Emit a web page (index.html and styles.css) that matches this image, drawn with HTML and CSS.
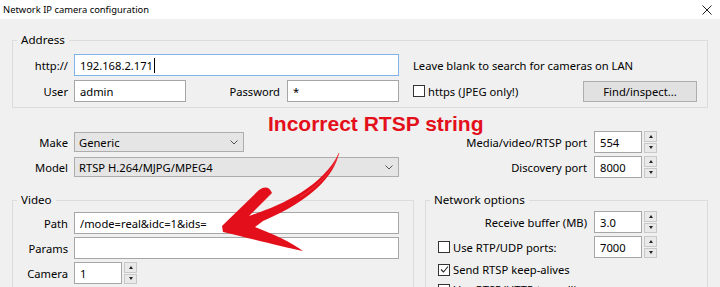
FILE: index.html
```html
<!DOCTYPE html>
<html lang="en">
<head>
    <meta charset="UTF-8">
    <meta name="viewport" content="width=device-width, initial-scale=1.0">
    <title>Network IP camera configuration</title>
    <link rel="stylesheet" href="styles.css">
</head>
<body>
    <div class="window">
        <div class="titlebar">
            <span class="title">Network IP camera configuration</span>
            <svg class="close" width="10" height="10" viewBox="0 0 10 10">
                <path d="M0.5 0.5 L9.5 9.5 M9.5 0.5 L0.5 9.5" stroke="#222" stroke-width="1"/>
            </svg>
        </div>

        <div class="dialog">
            <!-- address -->
            <fieldset class="group address">
                <legend>Address</legend>
                <div class="row">
                    <span class="lbl">http://</span>
                    <div class="field wide focus">192.168.2.171<span class="caret"></span></div>
                    <span class="hint">Leave blank to search for cameras on LAN</span>
                </div>
                <div class="row">
                    <span class="lbl">User</span>
                    <div class="field short">admin</div>
                    <span class="lbl-pass">Password</span>
                    <div class="field short">*</div>
                    <span class="check https"><span class="box"></span>https (JPEG only!)</span>
                    <button class="btn">Find/inspect...</button>
                </div>
            </fieldset>

            <!-- device -->
            <div class="device">
                <div class="row">
                    <span class="lbl">Make</span>
                    <div class="select make">Generic<svg class="chev" width="8" height="5" viewBox="0 0 8 5"><path d="M0.5 0.5 L4 4 L7.5 0.5" fill="none" stroke="#555" stroke-width="1"/></svg></div>
                    <div class="port">
                        <span class="port-lbl">Media/video/RTSP port</span>
                        <div class="spin"><div class="field">554</div><div class="updown"><span class="up"></span><span class="down"></span></div></div>
                    </div>
                </div>
                <div class="row">
                    <span class="lbl">Model</span>
                    <div class="select model">RTSP H.264/MJPG/MPEG4<svg class="chev" width="8" height="5" viewBox="0 0 8 5"><path d="M0.5 0.5 L4 4 L7.5 0.5" fill="none" stroke="#555" stroke-width="1"/></svg></div>
                    <div class="port">
                        <span class="port-lbl">Discovery port</span>
                        <div class="spin"><div class="field">8000</div><div class="updown"><span class="up"></span><span class="down"></span></div></div>
                    </div>
                </div>
            </div>

            <div class="groups">
                <fieldset class="group video">
                    <legend>Video</legend>
                    <div class="row">
                        <span class="lbl">Path</span>
                        <div class="field wide">/mode=real&amp;idc=1&amp;ids=</div>
                    </div>
                    <div class="row">
                        <span class="lbl">Params</span>
                        <div class="field wide"></div>
                    </div>
                    <div class="row">
                        <span class="lbl">Camera</span>
                        <div class="spin"><div class="field">1</div><div class="updown"><span class="up"></span><span class="down"></span></div></div>
                    </div>
                </fieldset>

                <fieldset class="group network">
                    <legend>Network options</legend>
                    <div class="row">
                        <span class="net-lbl">Receive buffer (MB)</span>
                        <div class="spin"><div class="field">3.0</div><div class="updown"><span class="up"></span><span class="down"></span></div></div>
                    </div>
                    <div class="row">
                        <span class="net-check"><span class="box"></span>Use RTP/UDP ports:</span>
                        <div class="spin"><div class="field">7000</div><div class="updown"><span class="up"></span><span class="down"></span></div></div>
                    </div>
                    <div class="row small">
                        <span class="net-check"><span class="box checked"><svg width="9" height="9" viewBox="0 0 9 9"><path d="M1 4.5 L3.5 7 L8 1.5" fill="none" stroke="#222" stroke-width="1.1"/></svg></span>Send RTSP keep-alives</span>
                    </div>
                    <div class="row small">
                        <span class="net-check"><span class="box"></span>Use RTSP/HTTP tunnelling</span>
                    </div>
                </fieldset>
            </div>
        </div>

        <div class="annotation">Incorrect RTSP string</div>
        <svg class="arrow" width="720" height="287" viewBox="0 0 720 287">
            <path d="M222 226 L259 190 Q268 184 272 193 L249 216 C279 206 322 188 339 153 C334 176 312 200 263 221 L255 227 C273 234 291 242 303 251 C283 247 248 238 223 232 Z" fill="#e3101b"/>
            <path d="M339 153 C333 170 320 185 300 197" fill="none" stroke="#f04048" stroke-width="0.8"/>
        </svg>
    </div>
</body>
</html>
```

FILE: styles.css
```css
body {
    margin: 0;
    font-family: "Noto Sans", sans-serif;
    font-size: 11.2px;
    color: #000;
    background-color: #f0f0f0;
    overflow: hidden;
}
.window {
    position: relative;
    width: 720px;
    height: 287px;
    overflow: hidden;
}
.titlebar {
    height: 19px;
    background-color: #fff;
    display: flex;
    align-items: center;
    justify-content: space-between;
    padding: 0 8px 0 3px;
}
.title { font-size: 9.4px; }
.close { margin-top: 1px; }
.dialog {
    padding: 14px 12px 0 12px;
}
.group {
    margin: 0;
    padding: 7px 0 5px 0;
    border: 1px solid #dcdcdc;
    min-width: 0;
}
.group legend {
    margin-left: 4px;
    padding: 0 4px;
    line-height: 14px;
    font-size: 11.6px;
}
.row {
    display: flex;
    align-items: center;
    height: 22px;
}
.row + .row { margin-top: 4px; }
.lbl {
    width: 55px;
    margin-right: 6px;
    text-align: right;
}
.field {
    box-sizing: border-box;
    height: 22px;
    border: 1px solid #a6a6a6;
    background-color: #fff;
    padding: 0 5px;
    display: flex;
    align-items: center;
}
.field.wide { width: 325px; }
.field.short { width: 112px; }
.field.focus { border-color: #7eb4ea; }
.caret {
    width: 1px;
    height: 15px;
    background-color: #000;
    margin-left: 1px;
}
.hint { margin-left: 14px; }
.lbl-pass {
    width: 94px;
    margin-right: 7px;
    text-align: right;
}
.check, .net-check {
    display: flex;
    align-items: center;
    white-space: nowrap;
}
.https { margin-left: 14px; }
.box {
    box-sizing: border-box;
    width: 12px;
    height: 12px;
    border: 1px solid #333;
    background-color: #fff;
    margin-right: 3px;
    display: flex;
    align-items: center;
    justify-content: center;
    flex: none;
}
.btn {
    margin-left: auto;
    margin-right: 10px;
    width: 114px;
    height: 21px;
    border: 1px solid #adadad;
    background-color: #e1e1e1;
    font-family: "Noto Sans", sans-serif;
    font-size: 11.2px;
    padding: 0;
}

.device {
    margin-top: 23px;
}
.device .row + .row { margin-top: 3px; }
.device .lbl { width: 56px; }
.select {
    box-sizing: border-box;
    height: 20px;
    border: 1px solid #adadad;
    background-color: #e5e5e5;
    padding: 0 5px 0 4px;
    display: flex;
    align-items: center;
    justify-content: space-between;
}
.select.make { width: 170px; }
.select.model { width: 325px; }
.port {
    margin-left: auto;
    margin-right: 51px;
    display: flex;
    align-items: center;
}
.port-lbl { margin-right: 7px; }

.spin {
    display: flex;
    gap: 2px;
}
.spin .field { width: 48px; }
.updown {
    width: 13px;
    height: 22px;
    display: flex;
    flex-direction: column;
    gap: 1px;
}
.updown span {
    flex: 1;
    box-sizing: border-box;
    border: 1px solid #c8c8c8;
    background-color: #e9e9e9;
    display: flex;
    align-items: center;
    justify-content: center;
}
.updown .up::after {
    content: "";
    border-left: 2.5px solid transparent;
    border-right: 2.5px solid transparent;
    border-bottom: 3px solid #222;
}
.updown .down::after {
    content: "";
    border-left: 2.5px solid transparent;
    border-right: 2.5px solid transparent;
    border-top: 3px solid #222;
}

.groups {
    display: flex;
    gap: 11px;
    margin-top: 15px;
}
.group.video { width: 402px; box-sizing: border-box; padding-top: 5px; }
.group.video .row + .row { margin-top: 3px; }
.group.network { flex: 1; padding-top: 4px; }
.group.network .row + .row { margin-top: 3px; }
.net-lbl {
    width: 161px;
    margin-right: 7px;
    text-align: right;
}
.net-check {
    min-width: 156px;
    margin-left: 12px;
}
.row.small { height: 17px; }

.annotation {
    position: absolute;
    left: 268px;
    top: 112px;
    font-family: "Liberation Sans", Arial, sans-serif;
    font-weight: bold;
    font-size: 21px;
    color: #e3101b;
}
.arrow {
    position: absolute;
    left: 0;
    top: 0;
    pointer-events: none;
}
```
